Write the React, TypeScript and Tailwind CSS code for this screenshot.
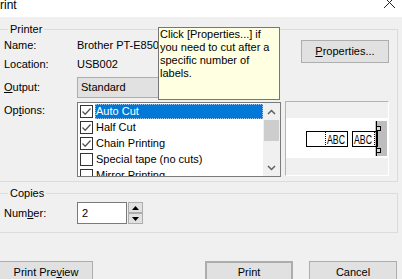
import type { ReactNode } from "react"

const options = [
  { label: "Auto Cut", checked: true },
  { label: "Half Cut", checked: true },
  { label: "Chain Printing", checked: true },
  { label: "Special tape (no cuts)", checked: false },
  { label: "Mirror Printing", checked: false },
]

function CheckBox({ checked }: { checked: boolean }) {
  return (
    <span className="w-[13px] h-[13px] border border-[#333] bg-white flex items-center justify-center shrink-0">
      {checked && (
        <svg width="11" height="11" viewBox="0 0 11 11">
          <path d="M1.5 5.5 L4.2 8.2 L9.5 2.5" fill="none" stroke="#555" strokeWidth="1.3" />
        </svg>
      )}
    </span>
  )
}

function Row({ label, children, className = "" }: { label: ReactNode; children: ReactNode; className?: string }) {
  return (
    <div className={"flex items-center h-[15px] leading-[15px] " + className}>
      <span className="w-[73px] shrink-0">{label}</span>
      <span className="whitespace-nowrap">{children}</span>
    </div>
  )
}

function Chevron({ up }: { up?: boolean }) {
  return (
    <svg width="9" height="6" viewBox="0 0 9 6">
      <path d={up ? "M1 5 L4.5 1.5 L8 5" : "M1 1 L4.5 4.5 L8 1"} fill="none" stroke="#606060" strokeWidth="1.5" />
    </svg>
  )
}

function Btn({ children, className = "" }: { children: ReactNode; className?: string }) {
  return (
    <button className={"h-[23px] bg-[#e1e1e1] border border-[#adadad] flex items-center justify-center leading-[15px] shrink-0 " + className}>
      {children}
    </button>
  )
}

export default function App() {
  return (
    <div className="relative w-[402px] h-[279px] overflow-hidden bg-[#f0f0f0] text-[11px] text-black font-['Liberation_Sans',Arial,sans-serif]">
      {/* title bar */}
      <div className="h-[17px] bg-white flex justify-between overflow-hidden">
        <span className="-mt-[1px] leading-[12px] text-[12px]">rint</span>
        <svg width="13" height="10" viewBox="0 0 13 10" className="mr-[6px] -mt-[2px]">
          <path d="M1 -1 L12 10 M12 -1 L1 10" stroke="#222" strokeWidth="1" />
        </svg>
      </div>

      {/* Printer group */}
      <fieldset className="-ml-[2px] w-[400px] mt-[5px] border border-[#dcdcdc] pl-[5px] pr-[8px] pb-[4px]">
        <legend className="ml-[4px] px-[2px] leading-[14px]">Printer</legend>

        <div className="flex pt-[2px]">
          <div className="flex-1">
            <Row label="Name:">Brother PT-E850</Row>
            <Row label="Location:" className="mt-[4px]">USB002</Row>
          </div>
          <Btn className="mt-[2px] w-[88px]">
            <span><span className="underline">P</span>roperties...</span>
          </Btn>
        </div>

        <div className="flex items-center mt-[5px]">
          <span className="w-[73px] shrink-0"><span className="underline">O</span>utput:</span>
          <div className="w-[202px] h-[21px] bg-[#e1e1e1] border border-[#adadad] pl-[3px] flex items-center">Standard</div>
        </div>

        <div className="flex mt-[4px]">
          <span className="w-[73px] shrink-0 leading-[16px]">Op<span className="underline">t</span>ions:</span>
          <div className="w-[204px] h-[75px] border border-[#7a7a7a] bg-white flex overflow-hidden">
            <div className="flex-1 overflow-hidden">
              {options.map((o, i) => (
                <div key={o.label} className="flex items-center h-[16px] pl-[2px]">
                  <CheckBox checked={o.checked} />
                  <span
                    className={
                      "ml-[2px] flex-1 h-[15px] leading-[15px] pl-[1px] whitespace-nowrap " +
                      (i === 0 ? "bg-[#0078d7] text-white outline-1 outline-dotted outline-offset-[-1px] outline-[#9fc8ef]" : "")
                    }
                  >
                    {o.label}
                  </span>
                </div>
              ))}
            </div>
            <div className="w-[17px] bg-[#f0f0f0] flex flex-col">
              <div className="h-[17px] flex items-center justify-center"><Chevron up /></div>
              <div className="h-[21px] mx-[1px] bg-[#cdcdcd]" />
              <div className="flex-1" />
              <div className="h-[17px] flex items-center justify-center"><Chevron /></div>
            </div>
          </div>

          {/* cut preview */}
          <div className="ml-[4px] -mt-[1px] w-[104px] h-[75px] border border-t-[#b4b4b4] border-l-[#b4b4b4] border-r-white border-b-white flex flex-col">
            <div className="h-[16px]" />
            <div className="h-[40px] bg-white">
              <svg width="102" height="40" viewBox="0 0 102 40">
                <rect x="20.5" y="13.5" width="41" height="15" fill="white" stroke="black" />
                <line x1="39.5" y1="14" x2="39.5" y2="28" stroke="black" strokeDasharray="1 1" />
                <text x="41" y="25.5" fontSize="12" textLength="18" lengthAdjust="spacingAndGlyphs" fontFamily="Liberation Sans, Arial, sans-serif">ABC</text>
                <rect x="66.5" y="13.5" width="25" height="15" fill="white" stroke="black" />
                <text x="68" y="25.5" fontSize="12" textLength="18" lengthAdjust="spacingAndGlyphs" fontFamily="Liberation Sans, Arial, sans-serif">ABC</text>
                <line x1="88.5" y1="14" x2="88.5" y2="28" stroke="black" strokeDasharray="1 1" />
                <rect x="92" y="3" width="9" height="35" fill="#bdbdbd" />
                <line x1="90.5" y1="3" x2="90.5" y2="38" stroke="black" strokeWidth="1.5" />
                <rect x="90.5" y="8.5" width="4" height="4" fill="#d9d9d9" stroke="black" />
                <rect x="90.5" y="30.5" width="4" height="4" fill="#d9d9d9" stroke="black" />
              </svg>
            </div>
            <div className="flex-1" />
          </div>
        </div>
      </fieldset>

      {/* Copies group */}
      <fieldset className="-ml-[2px] w-[400px] mt-[4px] border border-[#dcdcdc] pl-[5px] pr-[8px] pt-[2px] pb-[8px]">
        <legend className="ml-[4px] px-[2px] leading-[14px]">Copies</legend>
        <div className="flex items-center">
          <span className="w-[73px] shrink-0">Num<span className="underline">b</span>er:</span>
          <div className="w-[50px] h-[22px] border border-[#7a7a7a] bg-white pl-[4px] flex items-center">2</div>
          <div className="ml-[1px] w-[15px] h-[22px] flex flex-col justify-between">
            <div className="h-[11px] bg-[#e1e1e1] border border-[#adadad] flex items-center justify-center">
              <svg width="7" height="4" viewBox="0 0 7 4"><path d="M0 4 L3.5 0 L7 4 Z" fill="black" /></svg>
            </div>
            <div className="h-[11px] bg-[#e1e1e1] border border-[#adadad] flex items-center justify-center">
              <svg width="7" height="4" viewBox="0 0 7 4"><path d="M0 0 L3.5 4 L7 0 Z" fill="black" /></svg>
            </div>
          </div>
        </div>
      </fieldset>

      {/* buttons */}
      <div className="flex mt-[28px]">
        <Btn className="-ml-[1px] w-[94px]">
          <span>Print Pre<span className="underline">v</span>iew</span>
        </Btn>
        <div className="flex-1" />
        <Btn className="w-[88px] border-2 border-[#0078d7]">Print</Btn>
        <Btn className="ml-[16px] mr-[5px] w-[88px]">Cancel</Btn>
      </div>

      {/* tooltip */}
      <div className="absolute left-[158px] top-[27px] w-[122px] h-[73px] bg-[#ffffe1] border border-[#767676] pl-[1px] leading-[13px] whitespace-nowrap">
        <div>Click [Properties...] if</div>
        <div>you need to cut after a</div>
        <div>specific number of</div>
        <div>labels.</div>
      </div>
    </div>
  )
}
